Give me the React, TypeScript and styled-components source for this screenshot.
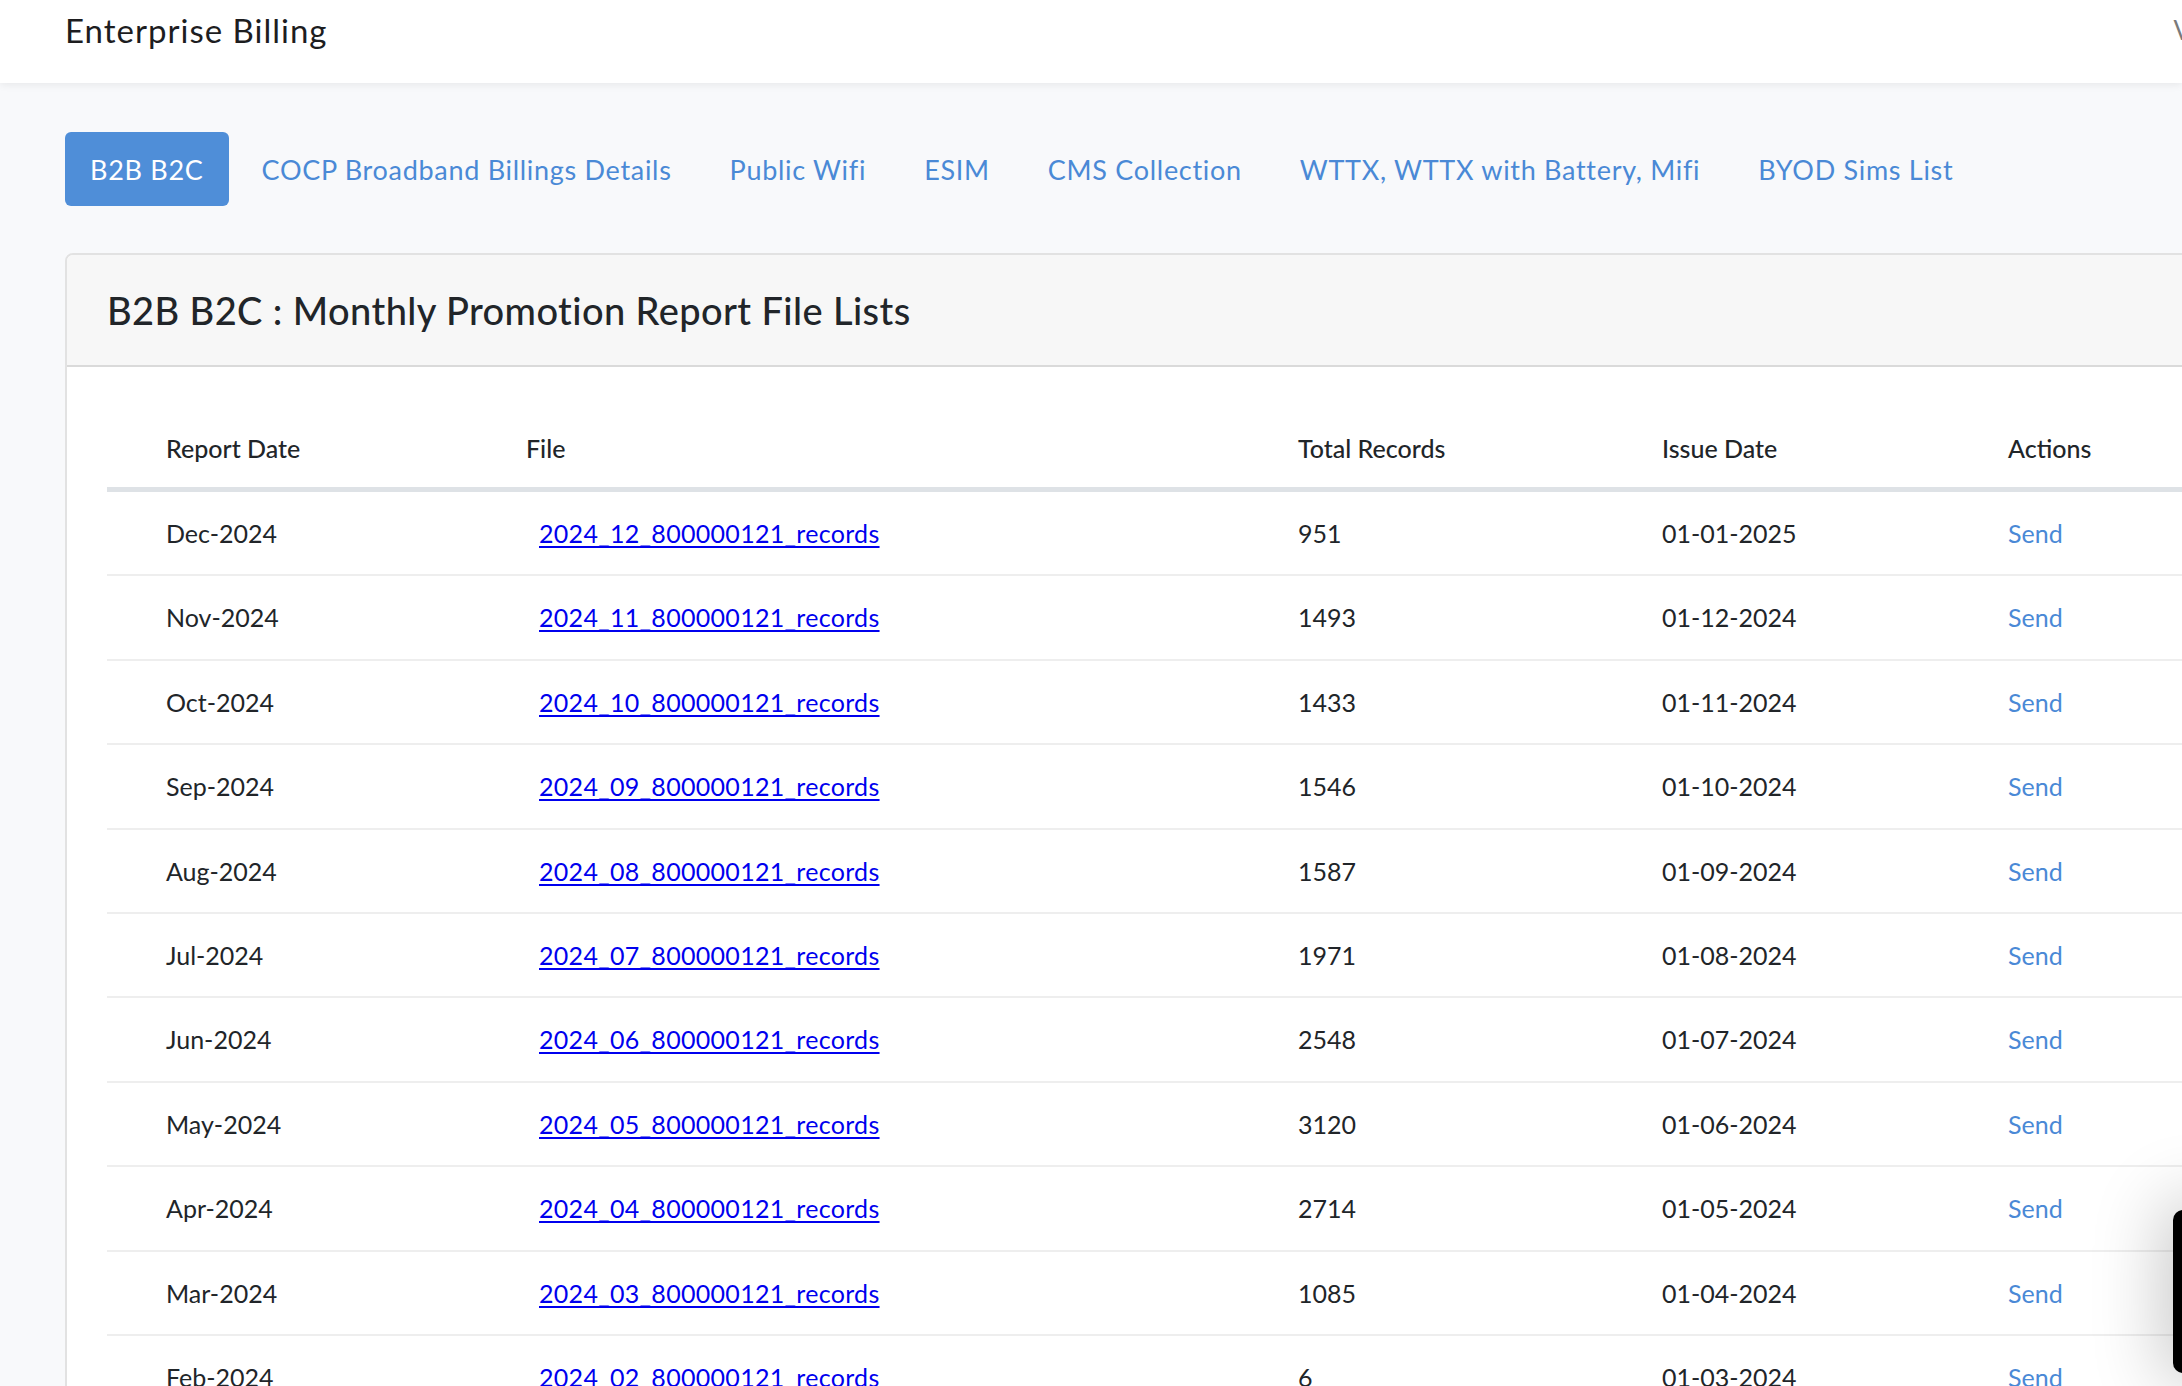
import React from "react";
import styled, { createGlobalStyle } from "styled-components";

const GlobalStyle = createGlobalStyle`
  html, body {
    margin: 0;
    padding: 0;
    background: #f8f9fb;
    overflow: hidden;
    font-family: Lato, "Open Sans", sans-serif;
    color: #212529;
  }
  * { box-sizing: border-box; }
`;

const Page = styled.div`
  width: 2182px;
  height: 1386px;
  overflow: hidden;
  position: relative;
`;

const Header = styled.header`
  height: 83px;
  background: #ffffff;
  box-shadow: 0 2px 8px rgba(0, 0, 0, 0.07);
  display: flex;
  justify-content: space-between;
  align-items: flex-start;
  padding: 8px 0 0 65px;
  overflow: hidden;
  position: relative;
  z-index: 1;
`;

const Title = styled.h1`
  margin: 0;
  font-size: 33px;
  line-height: 44px;
  font-weight: 400;
  letter-spacing: 1px;
  color: #1d1d1f;
`;

const UserMenu = styled.span`
  font-size: 26px;
  line-height: 44px;
  color: #7a7a7a;
  margin-right: -9px;
`;

const Main = styled.main`
  padding: 49px 0 0 65px;
`;

const Tabs = styled.nav`
  display: flex;
  gap: 8px;
`;

const Tab = styled.button<{ $active?: boolean }>`
  height: 74px;
  padding: 0 25px;
  border: none;
  border-radius: 6px;
  font-family: inherit;
  font-size: 27px;
  letter-spacing: 0.7px;
  font-weight: 400;
  cursor: pointer;
  background: ${(p) => (p.$active ? "#4f8ed8" : "transparent")};
  color: ${(p) => (p.$active ? "#ffffff" : "#4a89d6")};
  white-space: nowrap;
`;

const Card = styled.section`
  margin-top: 47px;
  width: 2240px;
  background: #ffffff;
  border: 2px solid #e2e2e2;
  border-radius: 8px;
  overflow: hidden;
`;

const CardHeader = styled.div`
  height: 112px;
  background: #f7f7f7;
  border-bottom: 2px solid #dadada;
  display: flex;
  align-items: center;
  padding-left: 40px;
`;

const CardTitle = styled.h2`
  margin: 0;
  font-size: 38px;
  font-weight: 500;
  letter-spacing: 0.4px;
  color: #212529;
`;

const CardBody = styled.div`
  padding: 42px 0 0 40px;
`;

const Table = styled.table`
  border-collapse: collapse;
  width: 2198px;
  table-layout: fixed;
`;

const Th = styled.th<{ $w?: number }>`
  width: ${(p) => (p.$w ? `${p.$w}px` : "auto")};
  text-align: left;
  font-weight: 500;
  font-size: 25px;
  line-height: 30px;
  padding: 24px 0 24px 59px;
  border-bottom: 5px solid #dee2e6;
  color: #212529;
`;

const Td = styled.td`
  font-size: 25px;
  line-height: 30.4px;
  padding: 26px 0 26px 59px;
  border-bottom: 2px solid #eeeeee;
  color: #212529;
  white-space: nowrap;
`;

const FileLink = styled.a`
  margin-left: 13px;
  color: #0000ee;
  letter-spacing: 0.3px;
  text-decoration: underline;
  text-underline-offset: 3px;
`;

const SendLink = styled.a`
  color: #4a89d6;
  text-decoration: none;
  cursor: pointer;
`;

const FloatingWidget = styled.div`
  position: absolute;
  left: 2173px;
  top: 1210px;
  width: 60px;
  height: 163px;
  background: #000000;
  border-radius: 10px;
  box-shadow: 0 0 70px 10px rgba(0, 0, 0, 0.22);
`;

const tabs = [
  "B2B B2C",
  "COCP Broadband Billings Details",
  "Public Wifi",
  "ESIM",
  "CMS Collection",
  "WTTX, WTTX with Battery, Mifi",
  "BYOD Sims List",
];

const rows = [
  ["Dec-2024", "2024_12_800000121_records", "951", "01-01-2025"],
  ["Nov-2024", "2024_11_800000121_records", "1493", "01-12-2024"],
  ["Oct-2024", "2024_10_800000121_records", "1433", "01-11-2024"],
  ["Sep-2024", "2024_09_800000121_records", "1546", "01-10-2024"],
  ["Aug-2024", "2024_08_800000121_records", "1587", "01-09-2024"],
  ["Jul-2024", "2024_07_800000121_records", "1971", "01-08-2024"],
  ["Jun-2024", "2024_06_800000121_records", "2548", "01-07-2024"],
  ["May-2024", "2024_05_800000121_records", "3120", "01-06-2024"],
  ["Apr-2024", "2024_04_800000121_records", "2714", "01-05-2024"],
  ["Mar-2024", "2024_03_800000121_records", "1085", "01-04-2024"],
  ["Feb-2024", "2024_02_800000121_records", "6", "01-03-2024"],
];

export default function App() {
  return (
    <Page>
      <GlobalStyle />
      <Header>
        <Title>Enterprise Billing</Title>
        <UserMenu>V</UserMenu>
      </Header>
      <Main>
        <Tabs>
          {tabs.map((t, i) => (
            <Tab key={t} $active={i === 0}>
              {t}
            </Tab>
          ))}
        </Tabs>
        <Card>
          <CardHeader>
            <CardTitle>B2B B2C : Monthly Promotion Report File Lists</CardTitle>
          </CardHeader>
          <CardBody>
            <Table>
              <thead>
                <tr>
                  <Th $w={360}>Report Date</Th>
                  <Th $w={772}>File</Th>
                  <Th $w={364}>Total Records</Th>
                  <Th $w={346}>Issue Date</Th>
                  <Th>Actions</Th>
                </tr>
              </thead>
              <tbody>
                {rows.map((r) => (
                  <tr key={r[0]}>
                    <Td>{r[0]}</Td>
                    <Td>
                      <FileLink href="#">{r[1]}</FileLink>
                    </Td>
                    <Td>{r[2]}</Td>
                    <Td>{r[3]}</Td>
                    <Td>
                      <SendLink>Send</SendLink>
                    </Td>
                  </tr>
                ))}
              </tbody>
            </Table>
          </CardBody>
        </Card>
      </Main>
      <FloatingWidget />
    </Page>
  );
}
